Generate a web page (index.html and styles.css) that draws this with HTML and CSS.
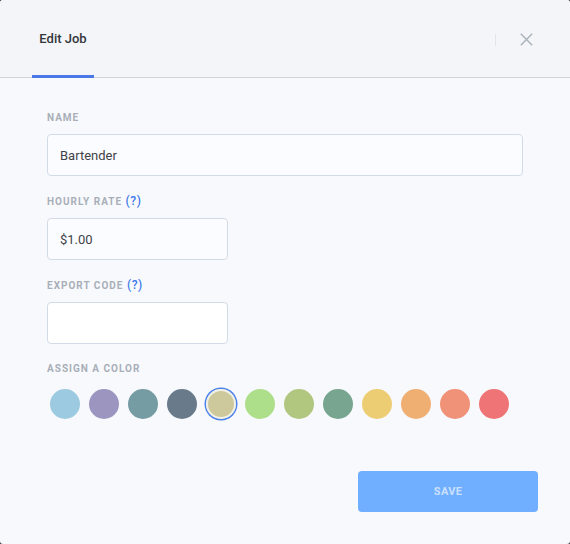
FILE: index.html
```html
<!DOCTYPE html>
<html>
<head>
<meta charset="utf-8">
<link rel="stylesheet" href="styles.css">
</head>
<body>
<div class="modal">
  <div class="header">
    <div class="tab">Edit Job</div>
    <div class="header-actions">
      <span class="divider"></span>
      <button class="close" aria-label="Close">
        <svg width="13" height="13" viewBox="0 0 13 13"><path d="M0.8 0.8 L12.2 12.2 M12.2 0.8 L0.8 12.2" stroke="#a9b1b9" stroke-width="1.4" fill="none"/></svg>
      </button>
    </div>
  </div>
  <div class="body">
    <div class="field">
      <label class="label">NAME</label>
      <div class="input wide">Bartender</div>
    </div>
    <div class="field">
      <label class="label">HOURLY RATE <span class="help">(?)</span></label>
      <div class="input narrow">$1.00</div>
    </div>
    <div class="field">
      <label class="label">EXPORT CODE <span class="help">(?)</span></label>
      <div class="input narrow empty"></div>
    </div>
    <div class="field">
      <label class="label">ASSIGN A COLOR</label>
      <div class="swatches">
        <span class="swatch c1"></span>
        <span class="swatch c2"></span>
        <span class="swatch c3"></span>
        <span class="swatch c4"></span>
        <span class="swatch c5 selected"></span>
        <span class="swatch c6"></span>
        <span class="swatch c7"></span>
        <span class="swatch c8"></span>
        <span class="swatch c9"></span>
        <span class="swatch c10"></span>
        <span class="swatch c11"></span>
        <span class="swatch c12"></span>
      </div>
    </div>
    <div class="footer">
      <button class="save">SAVE</button>
    </div>
  </div>
</div>
</body>
</html>
```

FILE: styles.css
```css
html, body {
  margin: 0;
  padding: 0;
  background: #3a3a3a;
}
body {
  font-family: Roboto, "Liberation Sans", Arial, sans-serif;
  width: 570px;
  height: 544px;
  overflow: hidden;
}
.modal {
  width: 570px;
  height: 544px;
  background: #f8f9fd;
  border-radius: 3px;
  overflow: hidden;
  display: flex;
  flex-direction: column;
}
.header {
  height: 77px;
  flex: none;
  background: #f4f5f9;
  border-bottom: 1px solid #d0d3d8;
  display: flex;
  justify-content: space-between;
  align-items: stretch;
  padding: 0 32px;
  box-sizing: content-box;
}
.tab {
  width: 62px;
  display: flex;
  align-items: center;
  justify-content: center;
  font-size: 13px;
  font-weight: 500;
  color: #33363b;
  border-bottom: 3px solid #4a78e8;
  margin-bottom: -1px;
  padding-top: 1px;
  box-sizing: border-box;
}
.header-actions {
  display: flex;
  align-items: center;
  padding-top: 2px;
  gap: 24px;
  margin-right: 5px;
}
.divider {
  width: 1px;
  height: 12px;
  background: #e2e4e8;
}
.close {
  border: 0;
  background: none;
  padding: 0;
  display: flex;
  cursor: pointer;
}
.body {
  flex: 1;
  padding: 34px 47px 32px 47px;
  display: flex;
  flex-direction: column;
}
.field {
  display: flex;
  flex-direction: column;
  margin-bottom: 19px;
}
.label {
  font-size: 10px;
  font-weight: 700;
  letter-spacing: 1px;
  color: #a8afb8;
  line-height: 12px;
  margin-bottom: 10px;
}
.help {
  color: #3f7be8;
  font-size: 12px;
  font-weight: 500;
  letter-spacing: 0.6px;
  margin-left: 0;
}
.input {
  height: 42px;
  box-sizing: border-box;
  border: 1px solid #d2dbe6;
  border-radius: 4px;
  background: #fbfcff;
  display: flex;
  align-items: center;
  padding: 0 12px;
  font-size: 13px;
  color: #3f4247;
}
.input.wide {
  width: 476px;
}
.input.narrow {
  width: 181px;
}
.input.empty {
  background: #ffffff;
}
.swatches {
  display: flex;
  gap: 9px;
  padding-left: 3px;
  margin-top: 4px;
}
.swatch {
  width: 30px;
  height: 30px;
  border-radius: 50%;
  display: block;
  flex: none;
}
.swatch.selected {
  box-shadow: inset 0 0 0 2px #f1f1ea, 0 0 0 1.5px #4a82ef;
}
.c1 { background: #9ccae0; }
.c2 { background: #9b95c0; }
.c3 { background: #759ba3; }
.c4 { background: #697a8a; }
.c5 { background: #cdc99d; }
.c6 { background: #addf8b; }
.c7 { background: #b1c67f; }
.c8 { background: #77a58f; }
.c9 { background: #edcd74; }
.c10 { background: #efaf73; }
.c11 { background: #f09277; }
.c12 { background: #ef7475; }
.footer {
  margin-top: auto;
  display: flex;
  justify-content: flex-end;
  margin-right: -15px;
}
.save {
  width: 180px;
  height: 41px;
  border: 0;
  border-radius: 4px;
  background: #70aeff;
  color: #c9e0ff;
  font-family: Roboto, "Liberation Sans", Arial, sans-serif;
  font-size: 11px;
  font-weight: 700;
  letter-spacing: 0.3px;
  cursor: pointer;
}
```
